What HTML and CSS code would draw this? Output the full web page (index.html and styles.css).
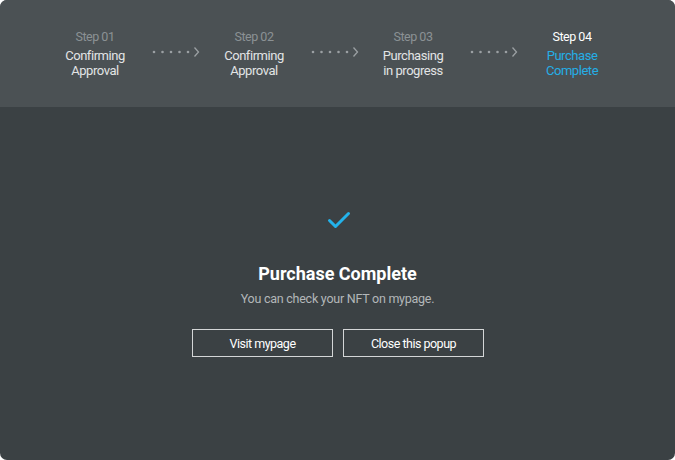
FILE: index.html
```html
<!DOCTYPE html>
<html>
<head>
<meta charset="utf-8">
<link rel="stylesheet" href="styles.css">
</head>
<body>
<div class="modal">
  <div class="steps">
    <div class="step">
      <div class="step-label">Step 01</div>
      <div class="step-title">Confirming<br>Approval</div>
    </div>
    <div class="arrow"><svg width="48" height="12" viewBox="0 0 48 12"><g fill="#9ba0a3"><circle cx="2" cy="6" r="1.3"/><circle cx="10.5" cy="6" r="1.3"/><circle cx="19" cy="6" r="1.3"/><circle cx="27.5" cy="6" r="1.3"/><circle cx="36" cy="6" r="1.3"/></g><path d="M42.5 1.5 L46.5 6 L42.5 10.5" fill="none" stroke="#9ba0a3" stroke-width="1.3"/></svg></div>
    <div class="step">
      <div class="step-label">Step 02</div>
      <div class="step-title">Confirming<br>Approval</div>
    </div>
    <div class="arrow"><svg width="48" height="12" viewBox="0 0 48 12"><g fill="#9ba0a3"><circle cx="2" cy="6" r="1.3"/><circle cx="10.5" cy="6" r="1.3"/><circle cx="19" cy="6" r="1.3"/><circle cx="27.5" cy="6" r="1.3"/><circle cx="36" cy="6" r="1.3"/></g><path d="M42.5 1.5 L46.5 6 L42.5 10.5" fill="none" stroke="#9ba0a3" stroke-width="1.3"/></svg></div>
    <div class="step">
      <div class="step-label">Step 03</div>
      <div class="step-title">Purchasing<br>in progress</div>
    </div>
    <div class="arrow"><svg width="48" height="12" viewBox="0 0 48 12"><g fill="#9ba0a3"><circle cx="2" cy="6" r="1.3"/><circle cx="10.5" cy="6" r="1.3"/><circle cx="19" cy="6" r="1.3"/><circle cx="27.5" cy="6" r="1.3"/><circle cx="36" cy="6" r="1.3"/></g><path d="M42.5 1.5 L46.5 6 L42.5 10.5" fill="none" stroke="#9ba0a3" stroke-width="1.3"/></svg></div>
    <div class="step active">
      <div class="step-label">Step 04</div>
      <div class="step-title">Purchase<br>Complete</div>
    </div>
  </div>
  <div class="content">
    <svg class="check" width="24" height="20" viewBox="0 0 24 20"><path d="M2.5 10.5 L8.5 16.5 L21.5 3.5" fill="none" stroke="#23b2ea" stroke-width="3" stroke-linecap="round" stroke-linejoin="round"/></svg>
    <h1 class="title">Purchase Complete</h1>
    <p class="subtitle">You can check your NFT on mypage.</p>
    <div class="actions">
      <button class="btn">Visit mypage</button>
      <button class="btn">Close this popup</button>
    </div>
  </div>
</div>
</body>
</html>
```

FILE: styles.css
```css
* { box-sizing: border-box; }
html, body { margin: 0; padding: 0; background: #ffffff; }
body { font-family: Roboto, "Noto Sans", sans-serif; }
.modal {
  width: 675px;
  height: 460px;
  border-radius: 7px;
  overflow: hidden;
  background: #3b4144;
  display: flex;
  flex-direction: column;
}
.steps {
  height: 107px;
  background: #4b5154;
  display: flex;
  align-items: flex-start;
  padding: 29px 0 0 45px;
}
.step {
  width: 100px;
  text-align: center;
}
.step-label {
  font-size: 12.5px;
  letter-spacing: -0.5px;
  line-height: 16px;
  color: #8b9194;
  margin-bottom: 3px;
}
.step-title {
  font-size: 13px;
  letter-spacing: -0.45px;
  line-height: 15px;
  color: #e2e4e5;
}
.step.active .step-label { color: #ffffff; }
.step.active .step-title { color: #25aee6; }
.arrow {
  width: 59px;
  display: flex;
  justify-content: center;
  padding-top: 17px;
  padding-left: 2px;
}
.arrow svg { display: block; }
.content {
  flex: 1;
  display: flex;
  flex-direction: column;
  align-items: center;
  padding-top: 103px;
}
.check { display: block; margin-left: 2px; }
.title {
  margin: 32px 0 0;
  font-size: 18px;
  line-height: 24px;
  font-weight: 700;
  color: #ffffff;
}
.subtitle {
  margin: 5px 0 0;
  font-size: 12.5px;
  letter-spacing: -0.25px;
  line-height: 16px;
  color: #b3b7b9;
}
.actions {
  margin-top: 22px;
  display: flex;
  gap: 10px;
  padding-left: 1px;
}
.btn {
  width: 141px;
  height: 28px;
  background: transparent;
  border: 1px solid #d4d6d7;
  color: #ffffff;
  font-family: Roboto, "Noto Sans", sans-serif;
  font-size: 12.5px;
  letter-spacing: -0.5px;
  padding: 0;
}
```
